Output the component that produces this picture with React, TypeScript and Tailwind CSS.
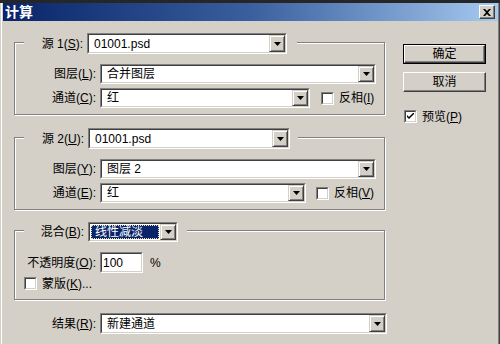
import type { ReactNode } from "react";

function DropButton() {
  return (
    <div className="flex h-full w-[16px] shrink-0 items-center justify-center border border-t-[#d4d0c8] border-l-[#d4d0c8] border-r-[#404040] border-b-[#404040] bg-[#d4d0c8] shadow-[inset_1px_1px_0_#fff,inset_-1px_-1px_0_#808080]">
      <svg width="7" height="4" viewBox="0 0 7 4">
        <polygon points="0,0 7,0 3.5,4" fill="#000" />
      </svg>
    </div>
  );
}

function Sunken({
  className,
  children,
}: {
  className: string;
  children: ReactNode;
}) {
  return (
    <div
      className={`flex shrink-0 border border-t-[#808080] border-l-[#808080] border-r-white border-b-white ${className}`}
    >
      <div className="flex min-w-0 flex-1 border border-t-[#404040] border-l-[#404040] border-r-[#d4d0c8] border-b-[#d4d0c8] bg-white">
        {children}
      </div>
    </div>
  );
}

function Combo({
  className,
  value,
  selected = false,
}: {
  className: string;
  value: string;
  selected?: boolean;
}) {
  return (
    <Sunken className={className}>
      {selected ? (
        <div className="m-[1px] flex flex-1 items-center border border-dotted border-[#e6e6a8] bg-[#0a246a] pl-[3px] text-white">
          {value}
        </div>
      ) : (
        <div className="flex flex-1 items-center pl-[5px]">{value}</div>
      )}
      <DropButton />
    </Sunken>
  );
}

function Check({ checked = false }: { checked?: boolean }) {
  return (
    <div className="flex h-[13px] w-[13px] shrink-0 border border-t-[#808080] border-l-[#808080] border-r-white border-b-white">
      <div className="flex flex-1 items-center justify-center border border-t-[#404040] border-l-[#404040] border-r-[#d4d0c8] border-b-[#d4d0c8] bg-white">
        {checked ? (
          <svg width="7" height="7" viewBox="0 0 7 7">
            <path d="M0 2 L0 4 L2 6 L7 1 L7 -1 L2 4 Z" fill="#000" />
          </svg>
        ) : null}
      </div>
    </div>
  );
}

function Label({ text, k, tail = "):" }: { text: string; k: string; tail?: string }) {
  return (
    <span className="whitespace-nowrap">
      {text}(<u className="underline-offset-1">{k}</u>
      {tail}
    </span>
  );
}

function Group({
  header,
  headerTop,
  className,
  children,
}: {
  header: ReactNode;
  headerTop: string;
  className: string;
  children: ReactNode;
}) {
  return (
    <div
      className={`w-[371px] border border-[#808080] shadow-[inset_1px_1px_0_#fff,1px_1px_0_#fff] ${className}`}
    >
      <div
        className={`ml-[9px] flex w-fit items-center bg-[#d4d0c8] ${headerTop}`}
      >
        {header}
      </div>
      {children}
    </div>
  );
}

function Row({ label, children, className = "" }: { label: ReactNode; children: ReactNode; className?: string }) {
  return (
    <div className={`flex items-center ${className}`}>
      <div className="w-[81px] shrink-0 text-right">{label}</div>
      <div className="ml-[4px] flex items-center">{children}</div>
    </div>
  );
}

function Button({ text, primary = false }: { text: string; primary?: boolean }) {
  return primary ? (
    <div className="flex h-[20px] w-[83px] border border-black">
      <div className="flex flex-1 items-center justify-center border border-t-white border-l-white border-r-[#404040] border-b-[#404040] shadow-[inset_-1px_-1px_0_#808080]">
        {text}
      </div>
    </div>
  ) : (
    <div className="flex h-[20px] w-[83px] items-center justify-center border border-t-white border-l-white border-r-[#404040] border-b-[#404040] shadow-[inset_-1px_-1px_0_#808080]">
      {text}
    </div>
  );
}

export default function App() {
  return (
    <div className="h-[344px] w-[500px] overflow-hidden bg-[#d4d0c8] font-['Liberation_Sans','Noto_Sans_CJK_SC',sans-serif] text-[12px] leading-none text-black">
      <div className="h-[3px] bg-[#262626]" />
      <div className="h-[341px] border-r border-l border-r-[#404040] border-l-[#d4d0c8] pr-[1px] pl-[2px] shadow-[inset_1px_0_0_#fff,inset_-1px_0_0_#808080]">
        <div className="flex h-[18px] items-center justify-between bg-linear-to-r from-[#0a246a] via-[#3a5f9e] to-[#a6caf0] pl-[2px] pr-[3px]">
          <span className="text-[14px] font-bold text-white">计算</span>
          <div className="flex h-[14px] w-[16px] items-center justify-center border border-t-white border-l-white border-r-[#404040] border-b-[#404040] bg-[#d4d0c8] shadow-[inset_-1px_-1px_0_#808080]">
            <svg width="8" height="7" viewBox="0 0 8 7">
              <path d="M0 0 L2 0 L4 2 L6 0 L8 0 L5 3.5 L8 7 L6 7 L4 5 L2 7 L0 7 L3 3.5 Z" fill="#000" />
            </svg>
          </div>
        </div>

        <div className="flex">
          <div className="ml-[11px] flex w-[372px] flex-col">
            <Group
              className="mt-[21px] pb-[6px]"
              headerTop="-mt-[10px] pr-[10px]"
              header={
                <>
                  <div className="w-[59px] text-right">
                    <Label text="源 1" k="S" />
                  </div>
                  <Combo className="ml-[4px] h-[21px] w-[200px]" value="01001.psd" />
                </>
              }
            >
              <Row className="mt-[10px]" label={<Label text="图层" k="L" />}>
                <Combo className="h-[20px] w-[276px]" value="合并图层" />
              </Row>
              <Row className="mt-[4px]" label={<Label text="通道" k="C" />}>
                <Combo className="h-[20px] w-[210px]" value="红" />
                <div className="ml-[11px]">
                  <Check />
                </div>
                <span className="ml-[5px]">
                  <Label text="反相" k="I" tail=")" />
                </span>
              </Row>
            </Group>

            <Group
              className="mt-[22px] pb-[6px]"
              headerTop="-mt-[10px] pr-[8px]"
              header={
                <>
                  <div className="w-[60px] text-right">
                    <Label text="源 2" k="U" />
                  </div>
                  <Combo className="ml-[4px] h-[21px] w-[202px]" value="01001.psd" />
                </>
              }
            >
              <Row className="mt-[10px]" label={<Label text="图层" k="Y" />}>
                <Combo className="h-[20px] w-[276px]" value="图层 2" />
              </Row>
              <Row className="mt-[4px]" label={<Label text="通道" k="E" />}>
                <Combo className="h-[20px] w-[206px]" value="红" />
                <div className="ml-[10px]">
                  <Check />
                </div>
                <span className="ml-[5px]">
                  <Label text="反相" k="V" tail=")" />
                </span>
              </Row>
            </Group>

            <Group
              className="mt-[20px] pb-[9px]"
              headerTop="-mt-[9px] pr-[9px]"
              header={
                <>
                  <div className="w-[60px] text-right">
                    <Label text="混合" k="B" />
                  </div>
                  <Combo className="ml-[4px] h-[20px] w-[90px]" value="线性减淡" selected />
                </>
              }
            >
              <Row className="mt-[10px]" label={<Label text="不透明度" k="O" />}>
                <Sunken className="h-[21px] w-[43px]">
                  <div className="flex flex-1 items-center pl-[1px]">100</div>
                </Sunken>
                <span className="ml-[7px]">%</span>
              </Row>
              <div className="mt-[4px] flex items-center pl-[9px]">
                <Check />
                <span className="ml-[5px]">
                  <Label text="蒙版" k="K" tail=")..." />
                </span>
              </div>
            </Group>

            <div className="mt-[13px] flex items-center">
              <div className="w-[82px] shrink-0 text-right">
                <Label text="结果" k="R" />
              </div>
              <Combo className="ml-[4px] h-[21px] w-[287px]" value="新建通道" />
            </div>
          </div>

          <div className="ml-[17px] flex w-[83px] flex-col pt-[23px]">
            <Button text="确定" primary />
            <div className="mt-[8px]">
              <Button text="取消" />
            </div>
            <div className="mt-[18px] ml-[1px] flex items-center">
              <Check checked />
              <span className="ml-[5px]">
                <Label text="预览" k="P" tail=")" />
              </span>
            </div>
          </div>
        </div>
      </div>
    </div>
  );
}
